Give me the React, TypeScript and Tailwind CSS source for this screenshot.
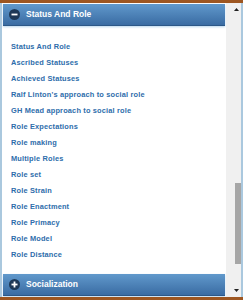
import React from "react";

const items = [
  "Status And Role",
  "Ascribed Statuses",
  "Achieved Statuses",
  "Ralf Linton's approach to social role",
  "GH Mead approach to social role",
  "Role Expectations",
  "Role making",
  "Multiple Roles",
  "Role set",
  "Role Strain",
  "Role Enactment",
  "Role Primacy",
  "Role Model",
  "Role Distance",
];

function SectionHeader({ title, open }: { title: string; open: boolean }) {
  return (
    <div className="mx-[1px] h-[22px] flex items-center gap-[6px] pl-[6px] bg-gradient-to-b from-[#6199cc] to-[#3a6ca3] border-b border-[#2c5888] shadow-[0_1px_2px_#b9d6ee]">
      <span className="w-[11px] h-[11px] rounded-full bg-[#1d3857] flex items-center justify-center">
        <svg width="7" height="7" viewBox="0 0 7 7">
          <rect x="0.5" y="2.6" width="6" height="1.8" fill="#fff" />
          {!open && <rect x="2.6" y="0.5" width="1.8" height="6" fill="#fff" />}
        </svg>
      </span>
      <span className="text-white font-bold text-[8.5px] leading-none">{title}</span>
    </div>
  );
}

export default function App() {
  return (
    <div
      className="w-[243px] h-[300px] overflow-hidden bg-white flex flex-col"
      style={{ fontFamily: '"Liberation Sans", Arial, sans-serif' }}
    >
      <div className="h-[3px] bg-[#9d5621]" />
      <div className="flex-1 flex">
        <div className="w-[2px] bg-[#aac8de]" />
        <div className="w-[224px] flex flex-col pt-[1px]">
          <SectionHeader title="Status And Role" open />
          <ul className="pt-[13px] pl-[9px] flex-1">
            {items.map((item) => (
              <li
                key={item}
                className="h-[16px] leading-[16px] text-[7.4px] tracking-[0.17px] font-bold text-[#2e6dab] whitespace-nowrap"
              >
                {item}
              </li>
            ))}
          </ul>
          <SectionHeader title="Socialization" open={false} />
          <div className="h-[1px]" />
        </div>
        {/* scrollbar */}
        <div className="w-[15px] bg-[#f0f0f0] flex flex-col items-end">
          <div className="h-[12px] w-full flex items-center justify-end pr-[2px]">
            <svg width="5" height="3" viewBox="0 0 5 3">
              <polygon points="2.5,0 5,3 0,3" fill="#222" />
            </svg>
          </div>
          <div className="h-[168px]" />
          <div className="h-[81px] w-[6px] bg-[#a6a6a6]" />
          <div className="flex-1 w-full flex items-end justify-end pr-[2px] pb-[5px]">
            <svg width="5" height="3" viewBox="0 0 5 3">
              <polygon points="0,0 5,0 2.5,3" fill="#222" />
            </svg>
          </div>
        </div>
        <div className="w-[2px] bg-[#aac8de]" />
      </div>
      <div className="h-[3px] bg-[#9d5621]" />
    </div>
  );
}
